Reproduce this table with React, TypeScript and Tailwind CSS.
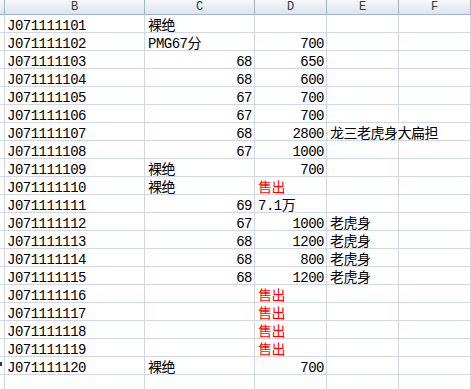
import React from "react";

type Cell = { text?: string; red?: boolean; num?: boolean };
type Row = { id: string; c?: Cell; d?: Cell; e?: string };

const rows: Row[] = [
  { id: "J071111101", c: { text: "裸绝" } },
  { id: "J071111102", c: { text: "PMG67分" }, d: { text: "700", num: true } },
  { id: "J071111103", c: { text: "68", num: true }, d: { text: "650", num: true } },
  { id: "J071111104", c: { text: "68", num: true }, d: { text: "600", num: true } },
  { id: "J071111105", c: { text: "67", num: true }, d: { text: "700", num: true } },
  { id: "J071111106", c: { text: "67", num: true }, d: { text: "700", num: true } },
  { id: "J071111107", c: { text: "68", num: true }, d: { text: "2800", num: true }, e: "龙三老虎身大扁担" },
  { id: "J071111108", c: { text: "67", num: true }, d: { text: "1000", num: true } },
  { id: "J071111109", c: { text: "裸绝" }, d: { text: "700", num: true } },
  { id: "J071111110", c: { text: "裸绝" }, d: { text: "售出", red: true } },
  { id: "J071111111", c: { text: "69", num: true }, d: { text: "7.1万" } },
  { id: "J071111112", c: { text: "67", num: true }, d: { text: "1000", num: true }, e: "老虎身" },
  { id: "J071111113", c: { text: "68", num: true }, d: { text: "1200", num: true }, e: "老虎身" },
  { id: "J071111114", c: { text: "68", num: true }, d: { text: "800", num: true }, e: "老虎身" },
  { id: "J071111115", c: { text: "68", num: true }, d: { text: "1200", num: true }, e: "老虎身" },
  { id: "J071111116", d: { text: "售出", red: true } },
  { id: "J071111117", d: { text: "售出", red: true } },
  { id: "J071111118", d: { text: "售出", red: true } },
  { id: "J071111119", d: { text: "售出", red: true } },
  { id: "J071111120", c: { text: "裸绝" }, d: { text: "700", num: true } },
];

const font = {
  fontFamily: '"Liberation Mono", "Noto Sans CJK SC", monospace',
};

const cellBase =
  "h-[18px] border-r border-b border-[#d0d7e5] text-[14px] leading-[14px] pt-[4px] whitespace-nowrap overflow-hidden tracking-[-0.5px]";

function DataCell({ cell }: { cell?: Cell }) {
  if (!cell?.text) return <div className={cellBase} />;
  return (
    <div
      className={`${cellBase} ${cell.num ? "text-right pr-[2px]" : "pl-[3px]"} ${
        cell.red ? "text-[#ff0000]" : "text-black"
      }`}
    >
      {cell.text}
    </div>
  );
}

const headers = ["B", "C", "D", "E", "F"];

export default function App() {
  return (
    <div className="h-[389px] w-[471px] overflow-hidden bg-white" style={font}>
      <div className="grid grid-cols-[5px_140px_110px_72px_72px_72px]">
        {/* column headers */}
        <div className="h-[15px] border-r border-b border-[#9eb6ce] bg-gradient-to-b from-[#f6f8fb] to-[#dde4ee]" />
        {headers.map((h) => (
          <div
            key={h}
            className="h-[15px] border-r border-b border-[#9eb6ce] bg-gradient-to-b from-[#f6f8fb] to-[#dde4ee] text-center text-[12px] leading-[15px] text-[#27413e]"
          >
            {h}
          </div>
        ))}

        {rows.map((r, i) => (
          <React.Fragment key={r.id}>
            <div className="relative h-[18px] border-r border-b border-[#d0d7e5] bg-white">
              {i === 19 && <span className="absolute left-0 top-[5px] h-[4px] w-[2px] bg-[#333]" />}
            </div>
            <div className={`${cellBase} pl-[2px] text-black`}>{r.id}</div>
            <DataCell cell={r.c} />
            <DataCell cell={r.d} />
            {r.e && r.e.length > 4 ? (
              <div className={`${cellBase} col-span-2 pl-[3px] text-black`}>{r.e}</div>
            ) : (
              <>
                <div className={`${cellBase} pl-[3px] text-black`}>{r.e}</div>
                <div className={cellBase} />
              </>
            )}
          </React.Fragment>
        ))}

        {/* trailing partial row */}
        <div className="h-[18px] border-r border-b border-[#d0d7e5]" />
        <div className={cellBase} />
        <div className={cellBase} />
        <div className={cellBase} />
        <div className={cellBase} />
        <div className={cellBase} />
      </div>
    </div>
  );
}
